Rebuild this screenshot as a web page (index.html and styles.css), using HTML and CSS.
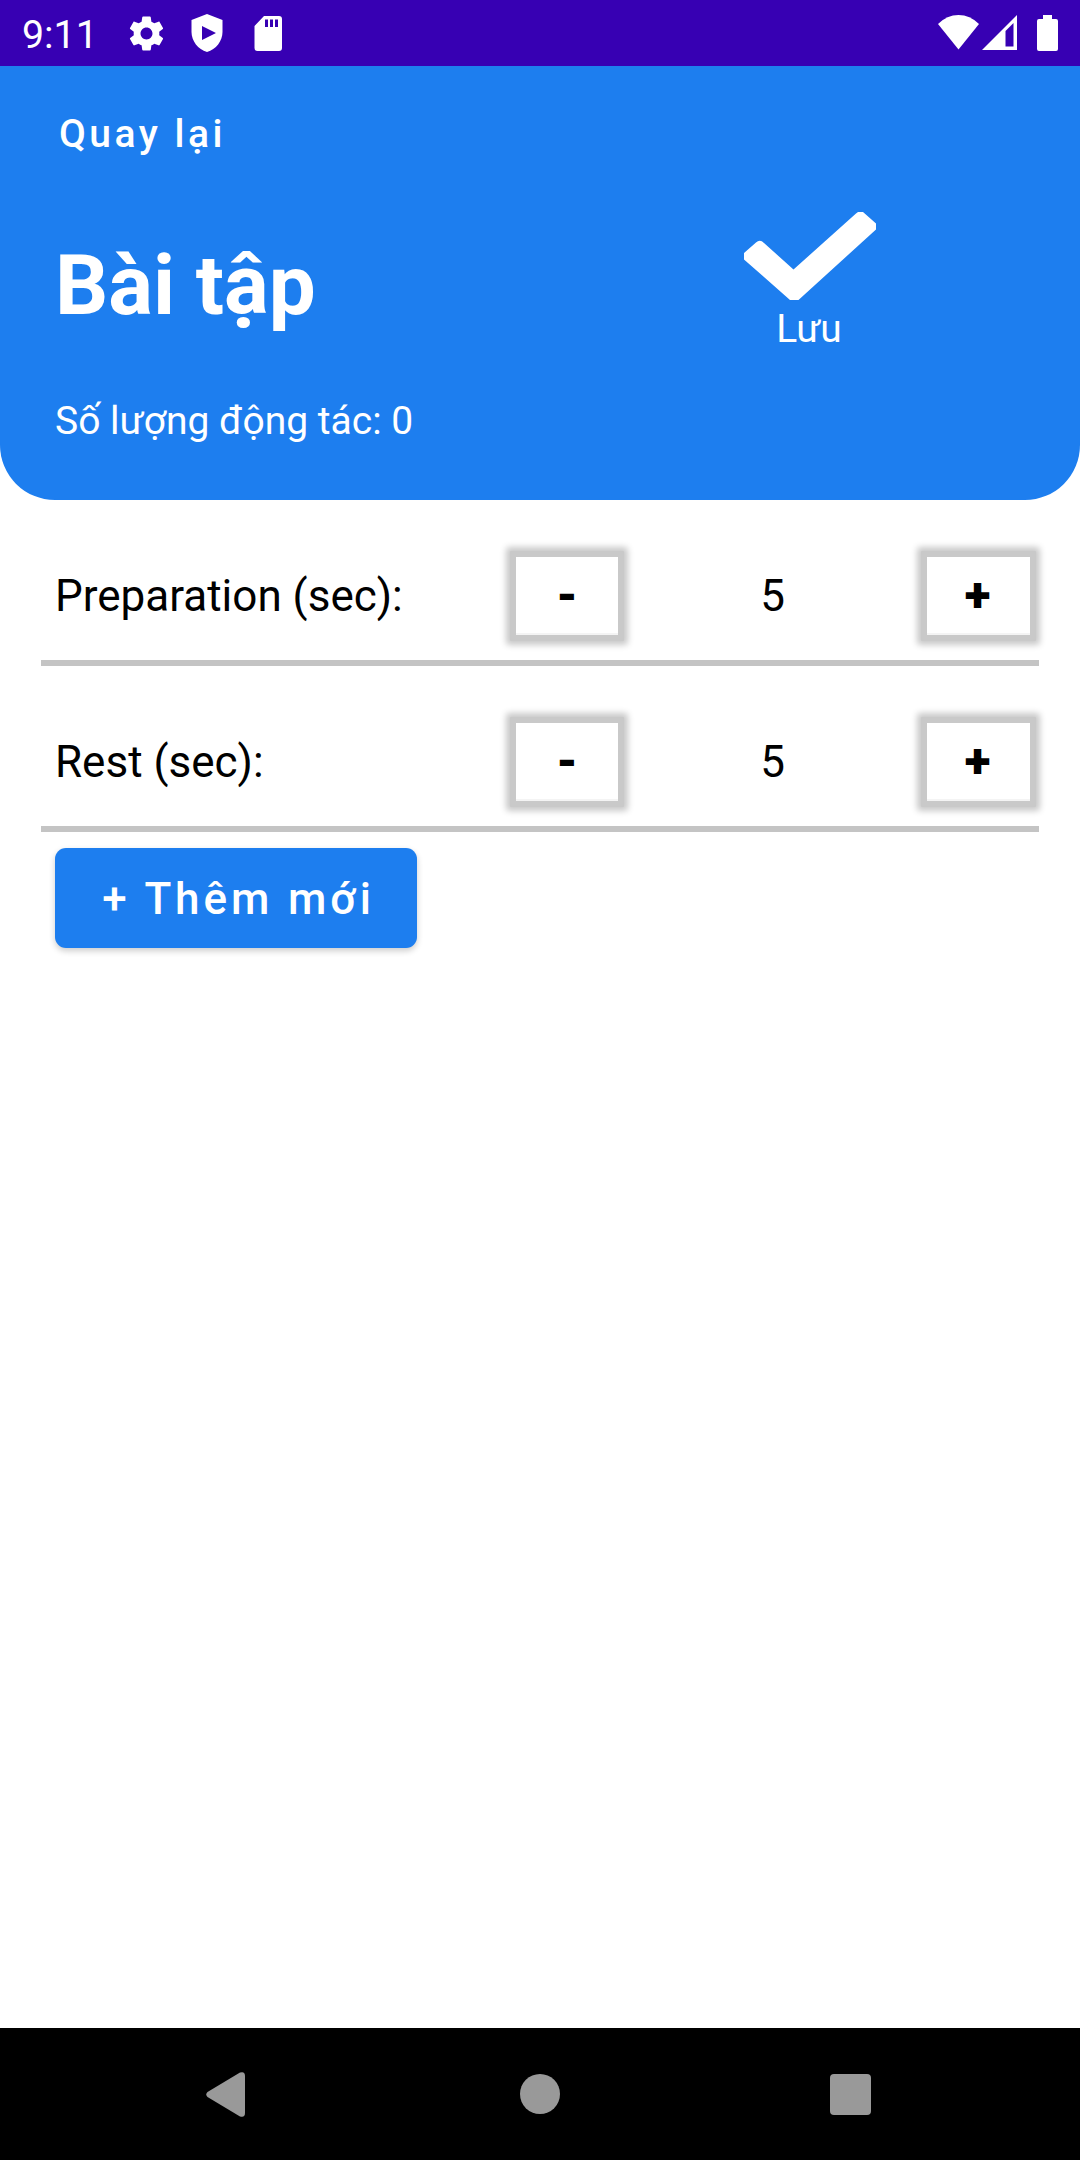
FILE: index.html
```html
<!DOCTYPE html>
<html lang="vi">
<head>
<meta charset="utf-8">
<title>Bài tập</title>
<link rel="stylesheet" href="styles.css">
</head>
<body>
<div class="screen">
  <div class="status-bar">
    <span class="clock">9:11</span>
    <svg class="icon-gear" viewBox="0 0 24 24"><path d="M19.43 12.98c.04-.32.07-.64.07-.98s-.03-.66-.07-.98l2.11-1.65c.19-.15.24-.42.12-.64l-2-3.46c-.12-.22-.39-.3-.61-.22l-2.49 1c-.52-.4-1.08-.73-1.69-.98l-.38-2.65C14.46 2.18 14.25 2 14 2h-4c-.25 0-.46.18-.49.42l-.38 2.65c-.61.25-1.17.59-1.69.98l-2.49-1c-.23-.09-.49 0-.61.22l-2 3.46c-.13.22-.07.49.12.64l2.11 1.65c-.04.32-.07.65-.07.98s.03.66.07.98l-2.11 1.65c-.19.15-.24.42-.12.64l2 3.46c.12.22.39.3.61.22l2.49-1c.52.4 1.08.73 1.69.98l.38 2.65c.03.24.24.42.49.42h4c.25 0 .46-.18.49-.42l.38-2.65c.61-.25 1.17-.59 1.69-.98l2.49 1c.23.09.49 0 .61-.22l2-3.46c.12-.22.07-.49-.12-.64l-2.11-1.65zM12 15.5c-1.93 0-3.500-1.57-3.500-3.500s1.57-3.500 3.500-3.500 3.500 1.57 3.500 3.500-1.57 3.500-3.500 3.500z"/></svg>
    <svg class="icon-shield" viewBox="0 0 32 38"><path fill-rule="evenodd" d="M16 0L31.500 6V18C31.500 27 25 35.500 16 38C7 35.500 .5 27 .5 18V6ZM11 12V26L25 19Z"/></svg>
    <svg class="icon-card" viewBox="0 0 28 35"><path fill-rule="evenodd" d="M10 0H25Q28 0 28 3V32Q28 35 25 35H3.500Q.5 35 .5 32V10ZM11 3.500V11H14V3.500ZM16 3.500V11H19V3.500ZM21 3.500V11H24V3.500Z"/></svg>
    <span class="spacer"></span>
    <svg class="icon-wifi" viewBox="0 0 41 35"><path d="M20.500 34.500L0 9Q9 0 20.500 0T41 9Z"/></svg>
    <svg class="icon-signal" viewBox="0 0 35 35"><path fill-rule="evenodd" d="M35 0V35H0ZM23.500 16V31.500H31.500V8Z"/></svg>
    <svg class="icon-battery" viewBox="0 0 21 36"><path d="M6 0H15V4H19Q21 4 21 6V34Q21 36 19 36H2Q0 36 0 34V6Q0 4 2 4H6Z"/></svg>
  </div>

  <header class="header">
    <div class="heading">
      <a class="back">Quay lại</a>
      <h1 class="title">Bài tập</h1>
      <p class="count">Số lượng động tác: 0</p>
    </div>
    <div class="save">
      <svg class="icon-check" viewBox="0 0 132 88"><path d="M0 41L12 30.500Q16 27 20 31L49.500 57.500L112 1.500L114 0H119L132 11.500V17.500L54.500 88H46L0 47.500Z"/></svg>
      <span class="save-label">Lưu</span>
    </div>
  </header>

  <main class="content">
    <div class="row">
      <span class="label">Preparation (sec):</span>
      <button class="step">-</button>
      <span class="value">5</span>
      <button class="step step-plus">+</button>
    </div>
    <div class="row">
      <span class="label">Rest (sec):</span>
      <button class="step">-</button>
      <span class="value">5</span>
      <button class="step step-plus">+</button>
    </div>
    <button class="add">+ Thêm mới</button>
  </main>

  <nav class="nav-bar">
    <svg class="nav-back" viewBox="0 0 39 45"><path d="M34 .6Q39 -1 39 4V41Q39 46 34 44.400L1.500 25Q-1 22.500 1.500 20Z"/></svg>
    <span class="nav-home"></span>
    <span class="nav-recent"></span>
  </nav>
</div>
</body>
</html>
```
FILE: styles.css
```css
* {
  box-sizing: border-box;
  margin: 0;
  padding: 0;
}

body {
  background: #fff;
  font-family: Roboto, "Noto Sans", sans-serif;
}

svg {
  display: block;
  flex: none;
  fill: #fff;
}

button {
  border: 0;
  font-family: inherit;
}

.screen {
  display: flex;
  flex-direction: column;
  width: 1080px;
  height: 2160px;
}

.status-bar {
  display: flex;
  align-items: flex-start;
  height: 66px;
  padding: 14px 22px 0;
  background: #3700b3;
}

.clock {
  width: 104px;
  color: #fff;
  font-size: 39.3px;
  line-height: 42px;
}

.icon-gear {
  width: 41px;
  height: 41px;
  margin-top: -1px;
}

.icon-shield {
  width: 32px;
  height: 38px;
  margin-left: 24px;
}

.icon-card {
  width: 28px;
  height: 35px;
  margin: 2px 0 0 31px;
}

.spacer {
  flex: 1;
}

.icon-wifi {
  width: 41px;
  height: 35px;
  margin-top: 1px;
}

.icon-signal {
  width: 35px;
  height: 35px;
  margin: 1px 20px 0 3px;
}

.icon-battery {
  width: 21px;
  height: 36px;
  margin-top: 1px;
}

.header {
  display: flex;
  justify-content: space-between;
  height: 434px;
  padding: 42px 204px 0 55px;
  border-radius: 0 0 55px 55px;
  background: #1d7eef;
  color: #fff;
}

.heading {
  display: flex;
  flex-direction: column;
}

.back {
  padding-left: 4px;
  font-size: 39px;
  font-weight: 500;
  line-height: 52px;
  letter-spacing: 0.0893em;
}

.title {
  margin-top: 76px;
  font-size: 83.5px;
  font-weight: 700;
  line-height: 100px;
}

.count {
  margin-top: 59px;
  font-size: 39px;
  line-height: 52px;
}

.save {
  display: flex;
  flex-direction: column;
  align-items: center;
  padding-top: 104px;
}

.icon-check {
  width: 132px;
  height: 88px;
}

.save-label {
  margin: 3px 2px 0 0;
  font-size: 38.9px;
  line-height: 52px;
}

.content {
  flex: 1;
  padding: 0 41px;
}

.row {
  display: grid;
  grid-template-columns: 455px 122px 289px 123px;
  align-items: center;
  height: 166px;
  padding: 36px 0 4px 14px;
  border-bottom: 6px solid #c4c4c4;
  font-size: 44px;
  line-height: 60px;
  color: #000;
}

.value {
  text-align: center;
  padding-right: 8px;
}

.step {
  width: 114px;
  height: 90px;
  border: 6px solid #c9c9c9;
  border-radius: 1px;
  background: #fff;
  box-shadow: 0 0 6px 4px #c9c9c9, inset 0 -2px #f4f4f4;
  font-size: 48px;
  font-weight: 900;
  line-height: 78px;
  color: #000;
}

.step-plus {
  width: 115px;
  padding-right: 2px;
}

.add {
  display: block;
  width: 362px;
  height: 100px;
  margin: 16px 0 0 14px;
  padding: 3px 0 0 5px;
  border-radius: 11px;
  background: #1d7eef;
  box-shadow: 0 3px 6px rgba(0, 0, 0, 0.2);
  font-size: 44px;
  font-weight: 500;
  line-height: 97px;
  letter-spacing: 0.0893em;
  color: #fff;
}

.nav-bar {
  display: flex;
  align-items: center;
  height: 132px;
  padding: 0 208px 0 206px;
  background: #000;
}

.nav-back {
  width: 39px;
  height: 45px;
  fill: #999;
}

.nav-home {
  width: 40px;
  height: 40px;
  margin: 0 270px 0 275px;
  border-radius: 50%;
  background: #999;
}

.nav-recent {
  width: 41px;
  height: 41px;
  border-radius: 4px;
  background: #999;
}
```
